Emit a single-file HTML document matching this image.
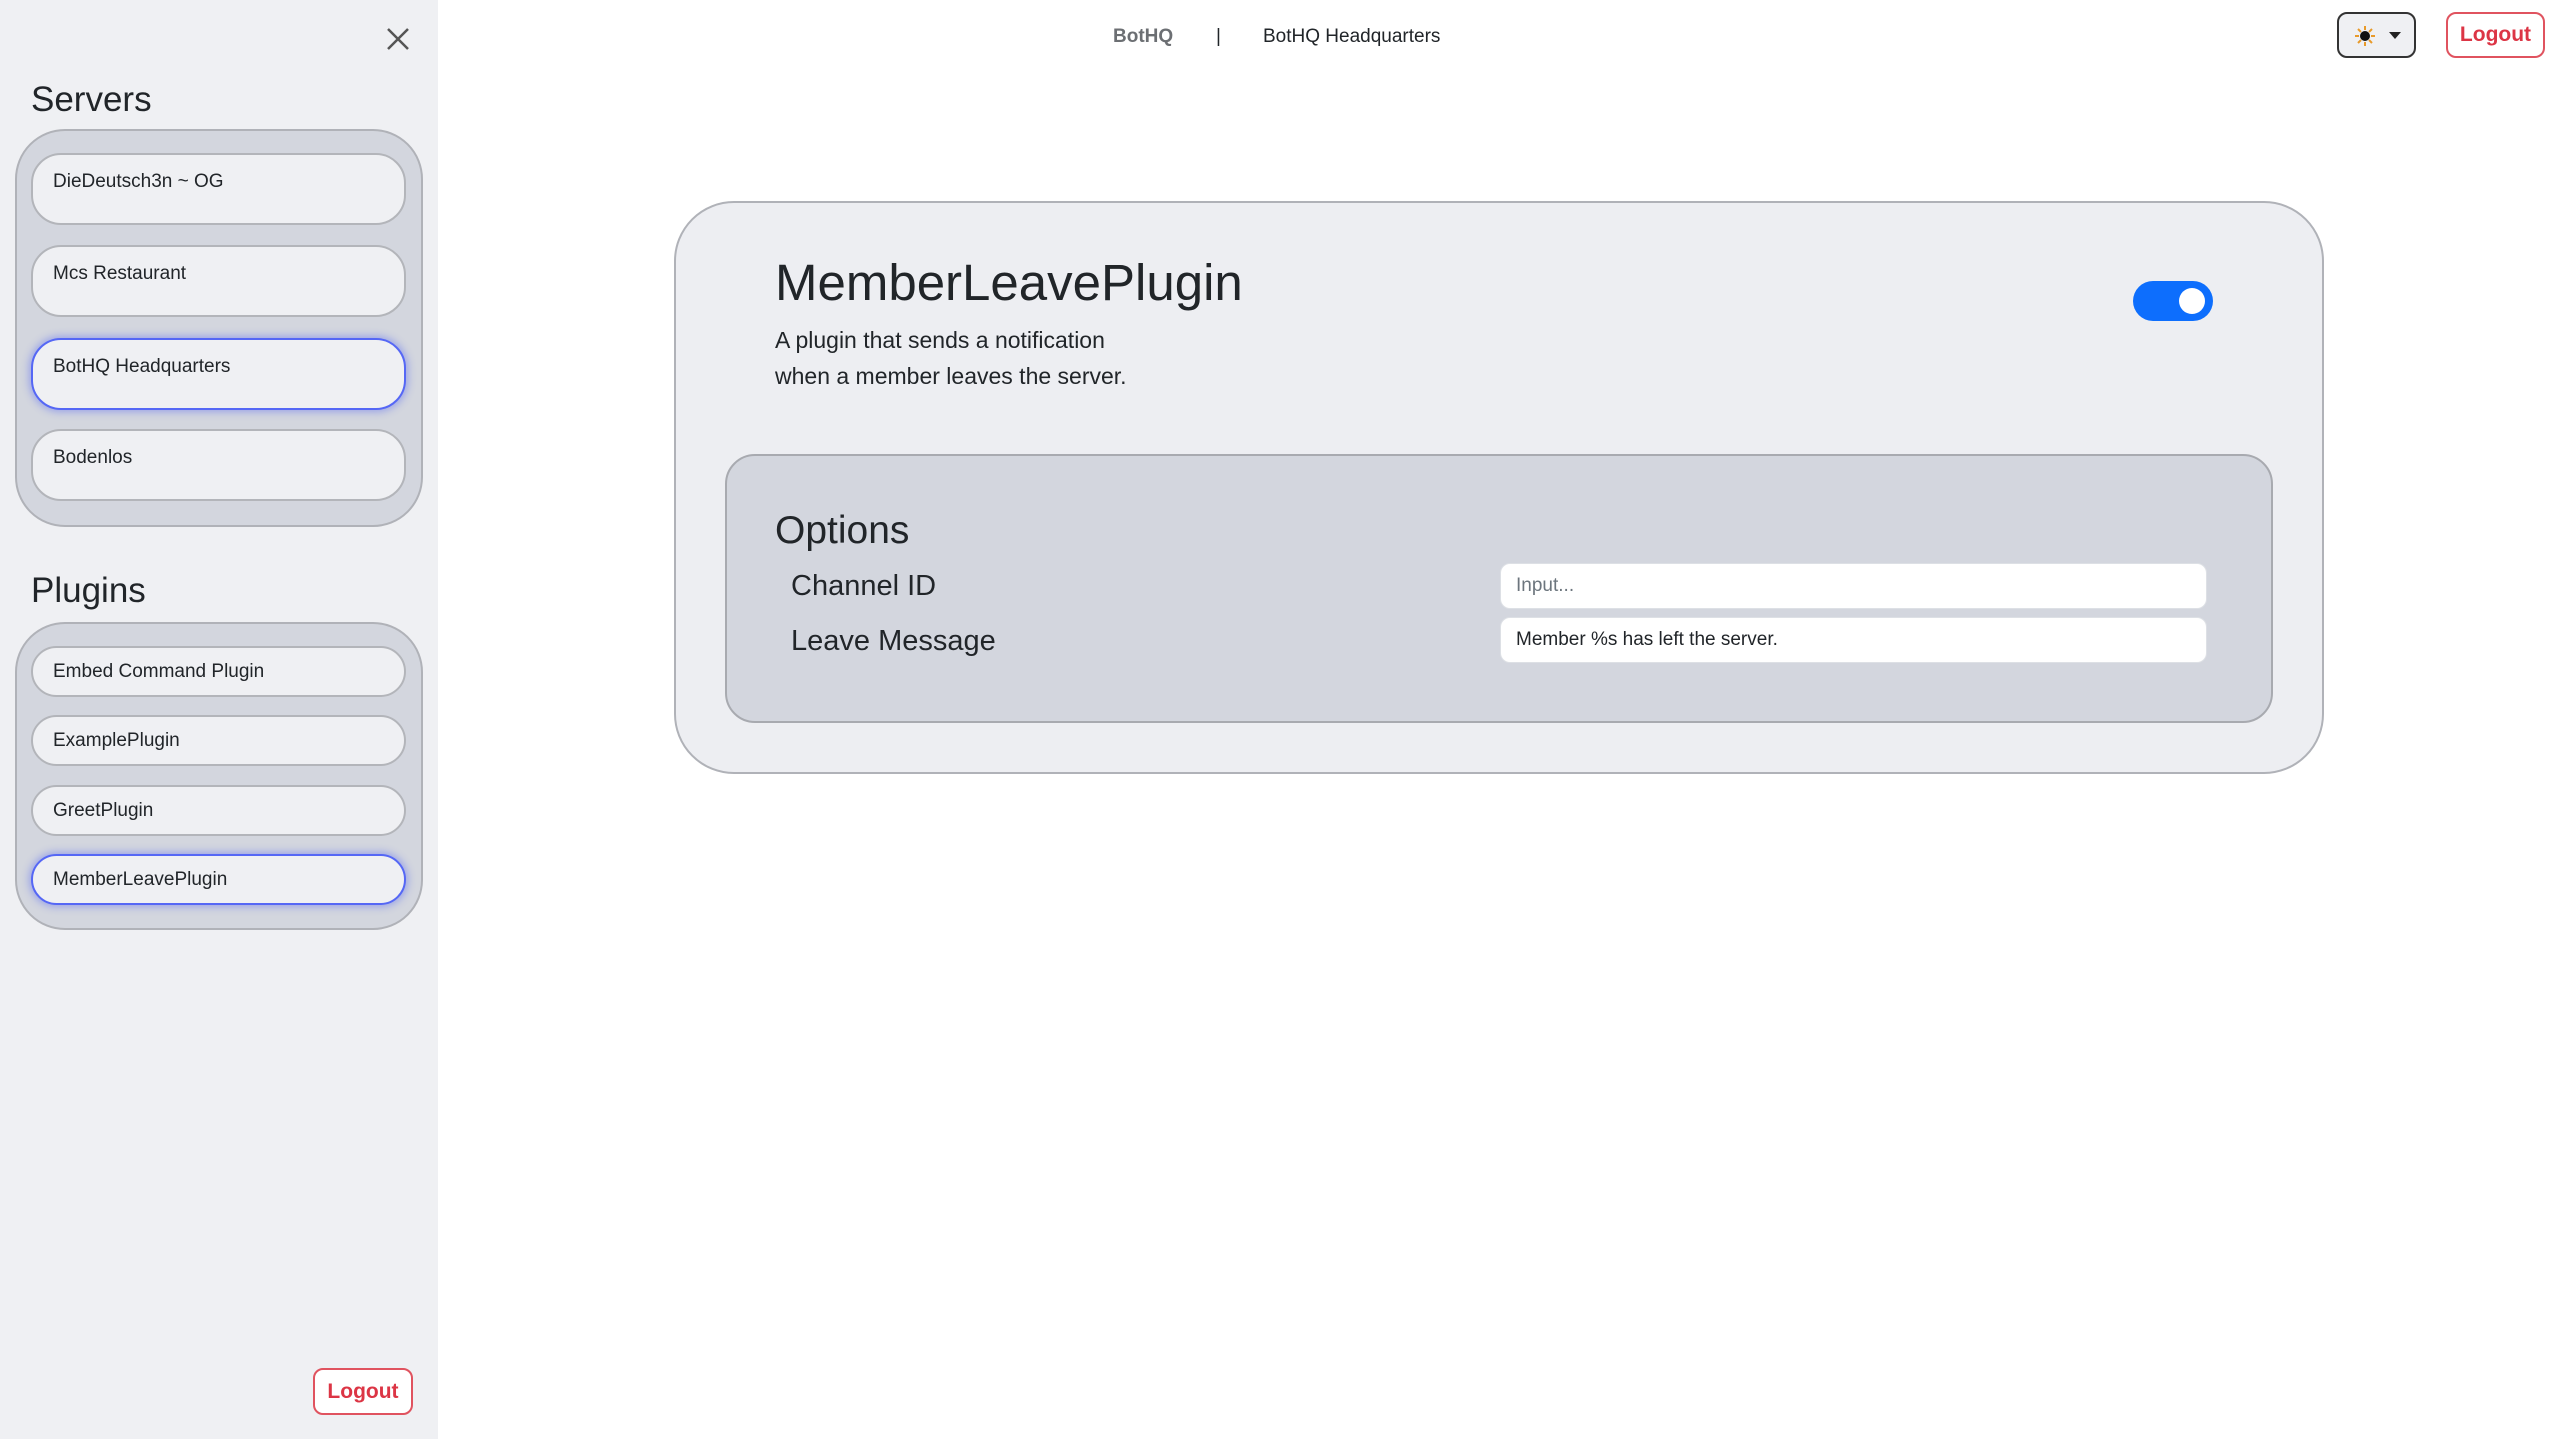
<!DOCTYPE html>
<html><head><meta charset="utf-8"><style>
*{box-sizing:border-box;margin:0;padding:0}
body{width:2559px;height:1439px;background:#fff;font-family:"Liberation Sans",sans-serif;color:#212529;position:relative;overflow:hidden}
.side{position:absolute;left:0;top:0;width:438px;height:1439px;background:#eff0f3}
.abs{position:absolute}
.h{font-size:35px;font-weight:500;left:31px}
.box{position:absolute;left:15px;width:408px;background:#d3d6de;border:2px solid #b0b2b8;border-radius:50px}
.it{position:absolute;left:31px;width:375px;background:#eff0f3;border:2px solid #b3b5ba;border-radius:30px;font-size:19px;padding-left:20px}
.sel{border-color:#5567f5;box-shadow:0 0 8px 2px rgba(85,103,245,.45)}
.btn{position:absolute;border:2px solid #e0535f;border-radius:10px;color:#dc3545;font-weight:bold;font-size:21px;display:flex;align-items:center;justify-content:center;background:#fff}
.card{position:absolute;left:674px;top:201px;width:1650px;height:573px;background:#edeef2;border:2px solid #b0b2b8;border-radius:60px}
.opt{position:absolute;left:725px;top:454px;width:1548px;height:269px;background:#d3d6de;border:2px solid #a8aab0;border-radius:30px}
.inp{position:absolute;left:1500px;width:707px;height:46px;background:#fff;border:1px solid #dde0e5;border-radius:10px;font-size:19px;padding-left:15px;display:flex;align-items:center}
</style></head><body>
<div class="side">
<svg class="abs" style="left:386px;top:27px" width="24" height="24"><path d="M2 2L22 22M22 2L2 22" stroke="#555" stroke-width="2.5"/></svg>
<div class="abs h" style="top:80px">Servers</div>
<div class="box" style="top:129px;height:398px"></div>
<div class="it" style="top:153px;height:72px;padding-top:16px">DieDeutsch3n ~ OG</div>
<div class="it" style="top:245px;height:72px;padding-top:16px">Mcs Restaurant</div>
<div class="it sel" style="top:338px;height:72px;padding-top:16px">BotHQ Headquarters</div>
<div class="it" style="top:429px;height:72px;padding-top:16px">Bodenlos</div>
<div class="abs h" style="top:571px">Plugins</div>
<div class="box" style="top:622px;height:308px"></div>
<div class="it" style="top:646px;height:51px;line-height:47px">Embed Command Plugin</div>
<div class="it" style="top:715px;height:51px;line-height:47px">ExamplePlugin</div>
<div class="it" style="top:785px;height:51px;line-height:47px">GreetPlugin</div>
<div class="it sel" style="top:854px;height:51px;line-height:47px">MemberLeavePlugin</div>
<div class="btn" style="left:313px;top:1368px;width:100px;height:47px">Logout</div>
</div>
<div class="abs" style="left:1113px;top:26px;font-size:19px;font-weight:bold;color:#6c6f73">BotHQ</div>
<div class="abs" style="left:1216px;top:26px;font-size:19px">|</div>
<div class="abs" style="left:1263px;top:26px;font-size:19px">BotHQ Headquarters</div>
<div class="abs" style="left:2337px;top:12px;width:79px;height:46px;border:2px solid #333;border-radius:10px;background:#eff0f3">
<svg class="abs" style="left:14px;top:10px" width="24" height="24"><g stroke="#e89a2a" stroke-width="2"><path d="M12 2v4M12 18v4M2 12h4M18 12h4M5 5l3 3M16 16l3 3M5 19l3-3M16 8l3-3"/></g><circle cx="12" cy="12" r="5" fill="#111"/></svg>
<svg class="abs" style="left:50px;top:18px" width="12" height="8"><path d="M0 0h12L6 7z" fill="#222"/></svg>
</div>
<div class="btn" style="left:2446px;top:12px;width:99px;height:46px">Logout</div>
<div class="card"></div>
<div class="abs" style="left:775px;top:253px;font-size:51px;font-weight:500">MemberLeavePlugin</div>
<div class="abs" style="left:775px;top:322px;font-size:23px;line-height:36px">A plugin that sends a notification<br>when a member leaves the server.</div>
<div class="abs" style="left:2133px;top:281px;width:80px;height:40px;background:#0d6efd;border-radius:20px"><div class="abs" style="left:46px;top:7px;width:26px;height:26px;background:#fff;border-radius:50%"></div></div>
<div class="opt"></div>
<div class="abs" style="left:775px;top:509px;font-size:39px;font-weight:500">Options</div>
<div class="abs" style="left:791px;top:570px;font-size:29px">Channel ID</div>
<div class="abs" style="left:791px;top:625px;font-size:29px">Leave Message</div>
<div class="inp" style="top:563px;color:#6c757d">Input...</div>
<div class="inp" style="top:617px">Member %s has left the server.</div>
</body></html>
